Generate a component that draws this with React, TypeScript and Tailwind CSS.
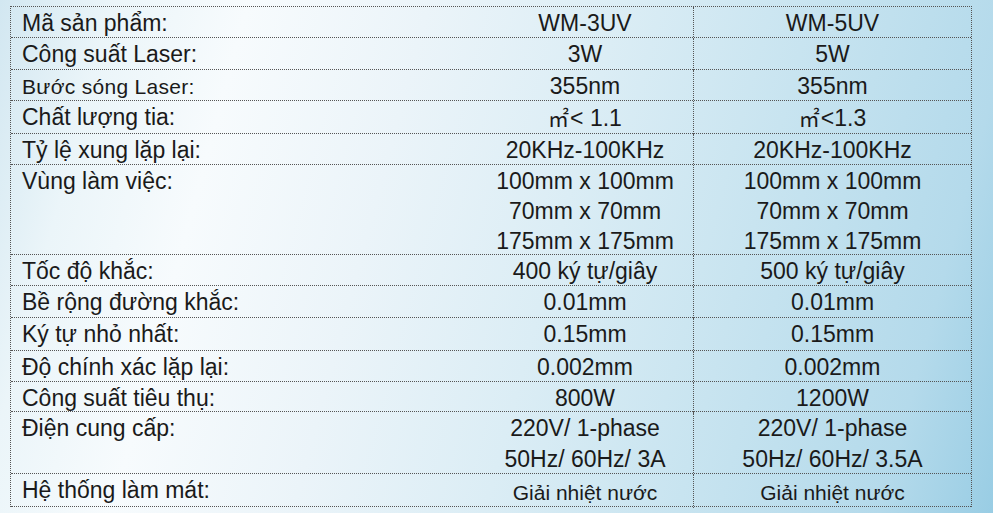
import React from 'react'

type Row = {
  label: string
  a: React.ReactNode[]
  b: React.ReactNode[]
  h: string
  smallLabel?: boolean
  smallValue?: boolean
}

// square-metre sign, drawn narrow as in the brochure
const M2 = () => (
  <span
    className="text-[21px] mr-[1px]"
    style={{ fontFamily: '"Noto Sans CJK SC", sans-serif' }}
  >
    ㎡
  </span>
)

const rows: Row[] = [
  { label: 'Mã sản phẩm:', a: ['WM-3UV'], b: ['WM-5UV'], h: 'h-[31px]' },
  { label: 'Công suất Laser:', a: ['3W'], b: ['5W'], h: 'h-[32px]' },
  { label: 'Bước sóng Laser:', a: ['355nm'], b: ['355nm'], h: 'h-[31px]', smallLabel: true },
  {
    label: 'Chất lượng tia:',
    a: [<><M2 />&lt; 1.1</>],
    b: [<><M2 />&lt;1.3</>],
    h: 'h-[33px]',
  },
  { label: 'Tỷ lệ xung lặp lại:', a: ['20KHz-100KHz'], b: ['20KHz-100KHz'], h: 'h-[31px]' },
  {
    label: 'Vùng làm việc:',
    a: ['100mm x 100mm', '70mm x 70mm', '175mm x 175mm'],
    b: ['100mm x 100mm', '70mm x 70mm', '175mm x 175mm'],
    h: 'h-[90px]',
  },
  { label: 'Tốc độ khắc:', a: ['400 ký tự/giây'], b: ['500 ký tự/giây'], h: 'h-[31px]' },
  { label: 'Bề rộng đường khắc:', a: ['0.01mm'], b: ['0.01mm'], h: 'h-[32px]' },
  { label: 'Ký tự nhỏ nhất:', a: ['0.15mm'], b: ['0.15mm'], h: 'h-[33px]' },
  { label: 'Độ chính xác lặp lại:', a: ['0.002mm'], b: ['0.002mm'], h: 'h-[31px]' },
  { label: 'Công suất tiêu thụ:', a: ['800W'], b: ['1200W'], h: 'h-[30px]' },
  {
    label: 'Điện cung cấp:',
    a: ['220V/ 1-phase', '50Hz/ 60Hz/ 3A'],
    b: ['220V/ 1-phase', '50Hz/ 60Hz/ 3.5A'],
    h: 'h-[62px]',
  },
  { label: 'Hệ thống làm mát:', a: ['Giải nhiệt nước'], b: ['Giải nhiệt nước'], h: 'h-[33px]', smallValue: true },
]

const Cell = ({ lines, small }: { lines: React.ReactNode[]; small?: boolean }) => (
  <div className={`flex flex-col items-center pt-[1px] ${small ? 'text-[21px] pt-[3px]' : 'text-[23px]'}`}>
    {lines.map((l, i) => (
      <div key={i} className={lines.length === 3 ? 'leading-[30px]' : 'leading-[31px]'}>
        {l}
      </div>
    ))}
  </div>
)

export default function App() {
  return (
    <div
      className="w-[993px] h-[513px] overflow-hidden pt-[6px] pl-[10px] text-[#1a1a1a] bg-[linear-gradient(105deg,#d2e7f1_0%,#ebf5f9_10%,#f7fbfd_22%,#ebf4f9_38%,#dbedf5_55%,#c8e4f0_72%,#b4daeb_90%,#99cde4_100%)]"
      style={{ fontFamily: '"Liberation Sans", Arial, sans-serif' }}
    >
      <div className="w-[962px] border-t border-l border-r border-dotted border-[#555]">
        {rows.map((r) => (
          <div
            key={r.label}
            className={`grid grid-cols-[466px_216px_1fr] border-b border-dotted border-[#555] ${r.h}`}
          >
            <div
              className={`pl-[11px] pt-[1px] leading-[31px] ${r.smallLabel ? 'text-[21px] tracking-[0.3px]' : 'text-[23px]'}`}
            >
              {r.label}
            </div>
            <Cell lines={r.a} small={r.smallValue} />
            <div className="border-l border-dotted border-[#555]">
              <Cell lines={r.b} small={r.smallValue} />
            </div>
          </div>
        ))}
      </div>
    </div>
  )
}
